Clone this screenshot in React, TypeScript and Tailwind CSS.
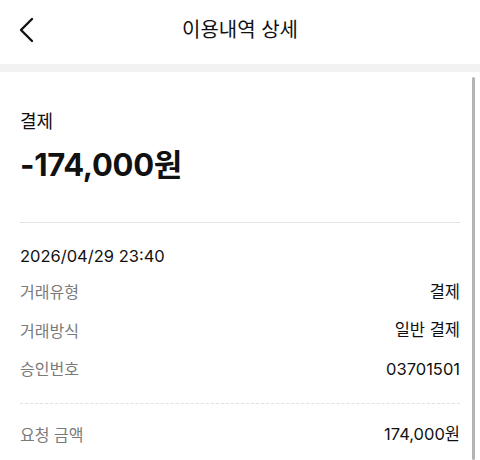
import React from "react";

const font = { fontFamily: '"Inter", "Noto Sans CJK KR", sans-serif' };

function Row({ label, value }: { label: string; value: string }) {
  return (
    <div className="flex items-center justify-between h-[38.5px]">
      <span className="text-[16px] text-[#7a7a7a]">{label}</span>
      <span className="text-[16.5px] text-[#111]">{value}</span>
    </div>
  );
}

export default function App() {
  return (
    <div className="w-[480px] h-[460px] bg-white overflow-hidden relative" style={font}>
      {/* Header */}
      <header className="relative h-16 flex items-center justify-center">
        <button className="absolute left-[18px] top-[17px] w-6 h-6">
          <svg width="18" height="26" viewBox="0 0 18 26" fill="none">
            <path d="M14 2 L3 13 L14 24" stroke="#111" strokeWidth="2.4" strokeLinecap="round" strokeLinejoin="round" />
          </svg>
        </button>
        <h1 className="text-[20px] text-[#111] -mt-1">이용내역 상세</h1>
      </header>
      <div className="h-2 bg-[#f2f2f2]" />

      {/* Scrollbar */}
      <div className="absolute right-[5px] top-[77px] bottom-0 w-[3px] rounded-full bg-[#b4b4b4]" />

      <main className="px-5">
        <section className="pt-[37px] pb-[37px] border-b border-[#e3e3e3]">
          <div className="text-[18px] text-[#111] leading-[26px]">결제</div>
          <div className="mt-[10px] text-[31px] font-bold text-[#111] leading-[40px] tracking-[-0.3px]">
            -174,000원
          </div>
        </section>

        <section className="pt-[20px] pb-[14px] border-b border-dashed border-[#e0e0e0]">
          <div className="text-[16.5px] text-[#111] leading-[26px] mb-[4px]">2026/04/29 23:40</div>
          <Row label="거래유형" value="결제" />
          <Row label="거래방식" value="일반 결제" />
          <Row label="승인번호" value="03701501" />
        </section>

        <section className="pt-[12px]">
          <Row label="요청 금액" value="174,000원" />
        </section>
      </main>
    </div>
  );
}
